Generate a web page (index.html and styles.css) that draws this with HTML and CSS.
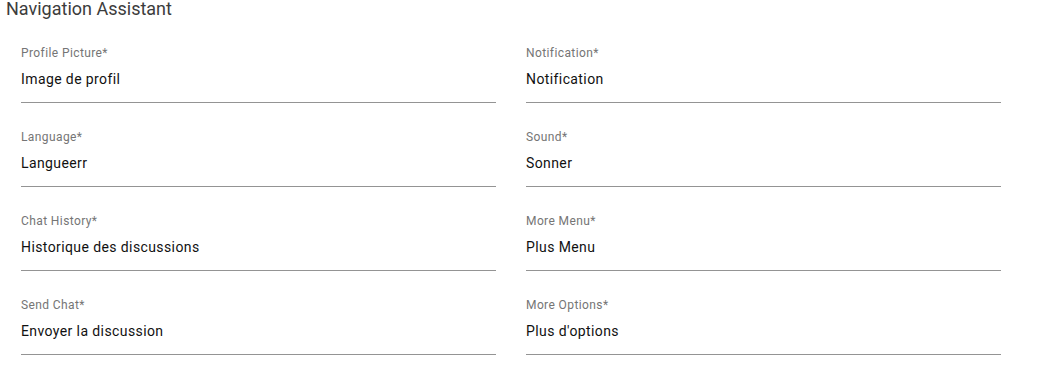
FILE: index.html
```html
<!DOCTYPE html>
<html>
<head>
<meta charset="utf-8">
<link rel="stylesheet" href="styles.css">
</head>
<body>
<div class="page">
  <h2 class="title">Navigation Assistant</h2>
  <div class="grid">
    <div class="field"><div class="label">Profile Picture*</div><div class="value">Image de profil</div></div>
    <div class="field"><div class="label">Notification*</div><div class="value">Notification</div></div>
    <div class="field"><div class="label">Language*</div><div class="value">Langueerr</div></div>
    <div class="field"><div class="label">Sound*</div><div class="value">Sonner</div></div>
    <div class="field"><div class="label">Chat History*</div><div class="value">Historique des discussions</div></div>
    <div class="field"><div class="label">More Menu*</div><div class="value">Plus Menu</div></div>
    <div class="field"><div class="label">Send Chat*</div><div class="value">Envoyer la discussion</div></div>
    <div class="field"><div class="label">More Options*</div><div class="value">Plus d'options</div></div>
  </div>
</div>
</body>
</html>
```

FILE: styles.css
```css
html, body {
  margin: 0;
  padding: 0;
  background: #fff;
  font-family: Roboto, "Liberation Sans", sans-serif;
}
.page {
  padding: 0 0 0 6px;
}
.title {
  margin: 0;
  font-size: 18px;
  font-weight: 400;
  line-height: 18px;
  color: #3c3c3c;
}
.grid {
  display: grid;
  grid-template-columns: 475px 475px;
  column-gap: 30px;
  row-gap: 27px;
  padding-left: 15px;
  padding-top: 28px;
}
.field {
  box-sizing: border-box;
  height: 57px;
  border-bottom: 1px solid #949494;
}
.label {
  font-size: 12px;
  line-height: 14px;
  letter-spacing: 0.4px;
  color: #757575;
}
.value {
  font-size: 14px;
  line-height: 16px;
  letter-spacing: 0.4px;
  color: #111;
  margin-top: 11px;
}
```
